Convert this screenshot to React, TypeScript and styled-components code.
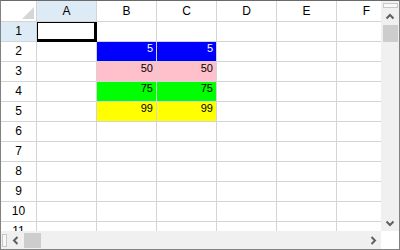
import React from "react";
import styled, { createGlobalStyle } from "styled-components";

const Global = createGlobalStyle`
  html, body { margin: 0; padding: 0; background: #ffffff; }
  * { box-sizing: border-box; }
`;

const Frame = styled.div`
  width: 400px;
  height: 250px;
  border: 1px solid #828282;
  border-top-color: #6a6a6a;
  display: grid;
  grid-template-columns: 380px 18px;
  grid-template-rows: 230px 18px;
  background: #ffffff;
  font-family: "Liberation Sans", Arial, sans-serif;
`;

const Sheet = styled.div`
  position: relative;
  overflow: hidden;
`;

const Grid = styled.div`
  display: grid;
  grid-template-columns: 35px repeat(6, 59px);
  grid-template-rows: 20px repeat(11, 19px);
  gap: 1px;
  background: #d4d4d4;
  width: max-content;
`;

const Corner = styled.div`
  background: #ffffff;
  position: relative;
`;

const Triangle = styled.div`
  position: absolute;
  right: 2px;
  bottom: 2px;
  width: 0;
  height: 0;
  border-left: 12px solid transparent;
  border-bottom: 12px solid #d6d6d6;
`;

const Header = styled.div<{ $active?: boolean }>`
  background: ${(p) => (p.$active ? "#dcebf5" : "#ffffff")};
  color: #000000;
  font-size: 12px;
  display: flex;
  align-items: center;
  justify-content: center;
  line-height: 1;
  overflow: hidden;
`;

const RowHeader = styled(Header)`
  align-items: flex-start;
  padding-top: 3px;
`;

const Cell = styled.div<{ $bg?: string; $fg?: string }>`
  background: ${(p) => p.$bg || "#ffffff"};
  color: ${(p) => p.$fg || "#000000"};
  font-size: 11px;
  text-align: right;
  padding: 1px 3px 0 0;
  line-height: 10px;
`;

const Selection = styled.div`
  position: absolute;
  left: 36px;
  top: 21px;
  width: 60px;
  height: 20px;
  border-style: solid;
  border-color: #000000;
  border-width: 1px 3px 3px 1px;
  pointer-events: none;
`;

const VBar = styled.div`
  background: #f0f0f0;
  display: flex;
  flex-direction: column;
  align-items: center;
  padding-top: 2px;
`;

const HBar = styled.div`
  background: #f0f0f0;
  display: flex;
  align-items: center;
  padding-left: 1px;
`;

const ScrollCorner = styled.div`
  background: #ffffff;
`;

const VSplit = styled.div`
  width: 15px;
  height: 5px;
  border: 1px solid #c8c8c8;
  background: #f8f8f8;
`;

const HSplit = styled.div`
  width: 5px;
  height: 13px;
  border: 1px solid #c8c8c8;
  background: #f8f8f8;
`;

const Arrow = styled.div`
  width: 17px;
  height: 17px;
  display: flex;
  align-items: center;
  justify-content: center;
  flex: none;
`;

const VThumb = styled.div`
  width: 15px;
  height: 17px;
  background: #cdcdcd;
`;

const HThumb = styled.div`
  width: 17px;
  height: 15px;
  background: #cdcdcd;
`;

const Spacer = styled.div`
  flex: 1;
`;

const Chevron = ({ dir }: { dir: "up" | "down" | "left" | "right" }) => {
  const pts = {
    up: "1.5,5.5 5,2 8.5,5.5",
    down: "1.5,2.5 5,6 8.5,2.5",
    left: "5.5,1 2,4.5 5.5,8",
    right: "2.5,1 6,4.5 2.5,8",
  }[dir];
  const w = dir === "up" || dir === "down" ? 10 : 8;
  const h = dir === "up" || dir === "down" ? 8 : 9;
  return (
    <svg width={w} height={h} viewBox={`0 0 ${w} ${h}`}>
      <polyline points={pts} fill="none" stroke="#606060" strokeWidth="2" />
    </svg>
  );
};

const cols = ["A", "B", "C", "D", "E", "F"];
const data: Record<number, { v: string; bg: string; fg: string }> = {
  2: { v: "5", bg: "#0000ff", fg: "#ffffff" },
  3: { v: "50", bg: "#ffc0cb", fg: "#000000" },
  4: { v: "75", bg: "#00ff00", fg: "#000000" },
  5: { v: "99", bg: "#ffff00", fg: "#000000" },
};

export default function App() {
  const rows = Array.from({ length: 11 }, (_, i) => i + 1);
  return (
    <>
      <Global />
      <Frame>
        <Sheet>
          <Grid>
            <Corner>
              <Triangle />
            </Corner>
            {cols.map((c) => (
              <Header key={c} $active={c === "A"}>
                {c}
              </Header>
            ))}
            {rows.map((r) => (
              <React.Fragment key={r}>
                <RowHeader $active={r === 1}>{r}</RowHeader>
                {cols.map((c) => {
                  const d = data[r];
                  const filled = d && (c === "B" || c === "C");
                  return (
                    <Cell
                      key={c}
                      $bg={filled ? d.bg : undefined}
                      $fg={filled ? d.fg : undefined}
                    >
                      {filled ? d.v : ""}
                    </Cell>
                  );
                })}
              </React.Fragment>
            ))}
          </Grid>
          <Selection />
        </Sheet>
        <VBar>
          <VSplit />
          <Arrow>
            <Chevron dir="up" />
          </Arrow>
          <VThumb />
          <Spacer />
          <Arrow>
            <Chevron dir="down" />
          </Arrow>
        </VBar>
        <HBar>
          <HSplit />
          <Arrow>
            <Chevron dir="left" />
          </Arrow>
          <HThumb />
          <Spacer />
          <Arrow>
            <Chevron dir="right" />
          </Arrow>
        </HBar>
        <ScrollCorner />
      </Frame>
    </>
  );
}
